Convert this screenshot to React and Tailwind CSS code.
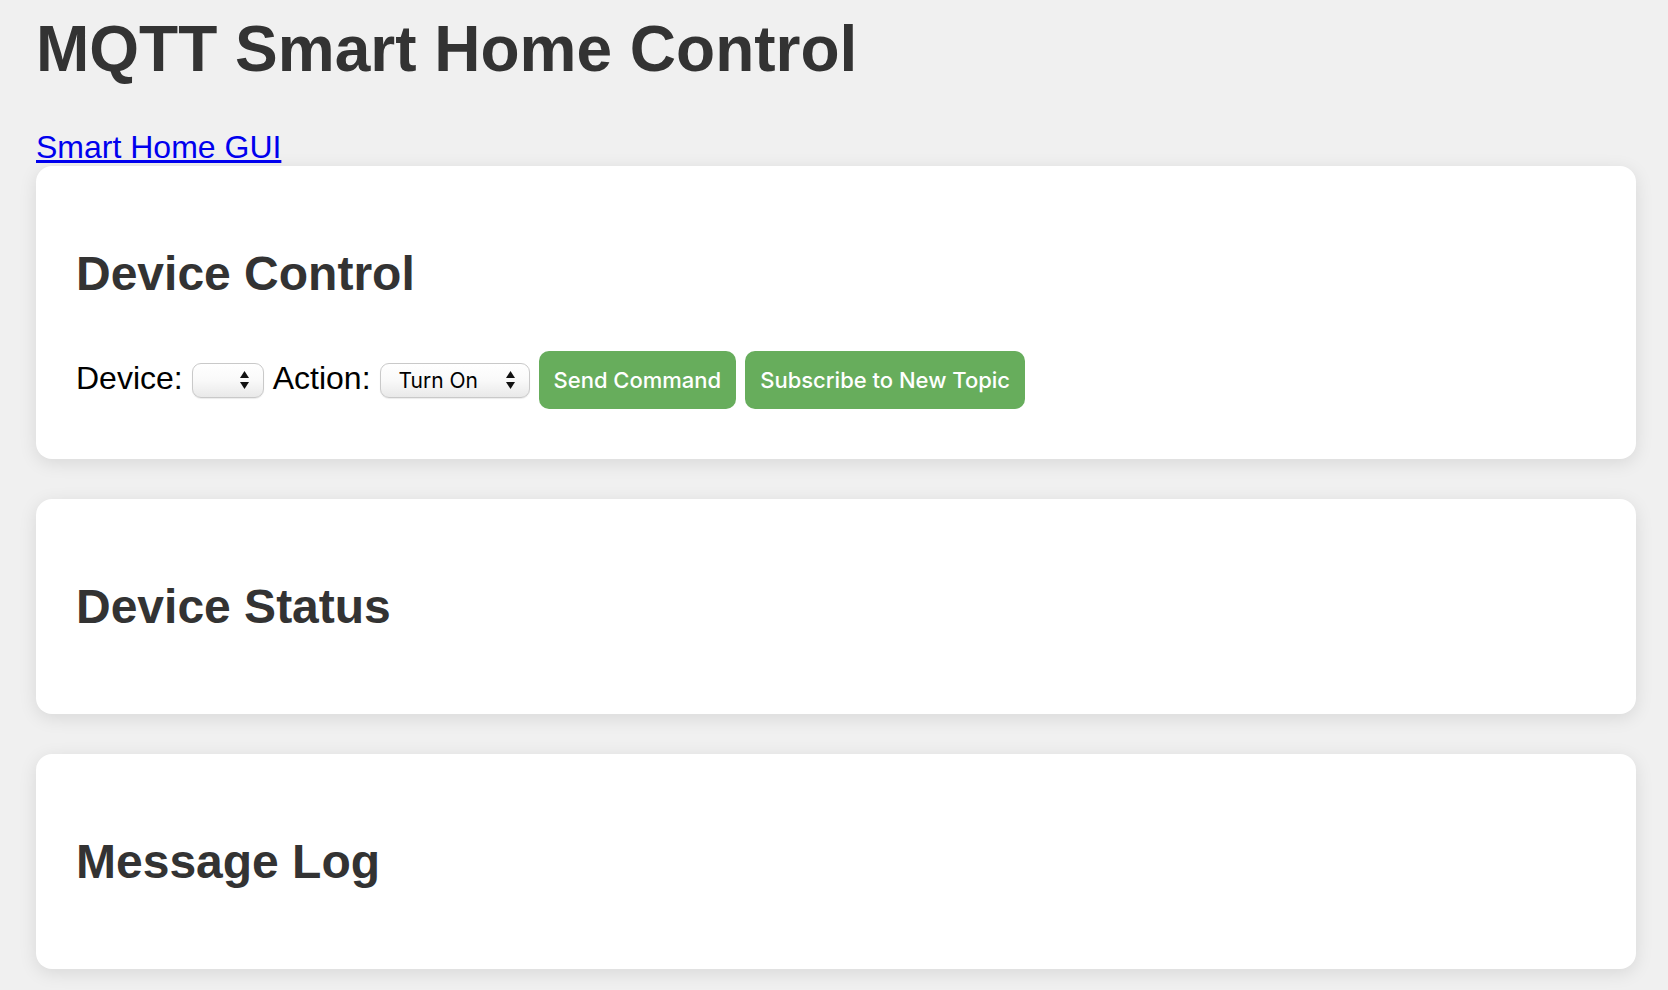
import React from "react";

const Arrows = () => (
    <svg width="9" height="18" viewBox="0 0 9 18" className="shrink-0">
        <polygon points="4.5,0 9,7 0,7" fill="#111" />
        <polygon points="0,11 9,11 4.5,18" fill="#111" />
    </svg>
);

const FakeSelect = ({ width, label }) => (
    <div
        className={`flex items-center justify-between h-[35px] ${width} rounded-[9px] border border-[#c9c9c9] bg-gradient-to-b from-white via-[#f9f9f9] to-[#e9e9e9] shadow-[0_1px_1px_rgba(0,0,0,0.08)] pl-[18px] pr-[14px]`}
    >
        <span className="font-['Inter',sans-serif] text-[21px] text-black leading-none">{label}</span>
        <Arrows />
    </div>
);

const Card = ({ title, children }) => (
    <section className="bg-white rounded-[16px] p-[40px] mb-[40px] shadow-[0_4px_18px_rgba(0,0,0,0.1)]">
        <h2 className="text-[48px] font-bold text-[#333] my-[40px]">{title}</h2>
        {children}
    </section>
);

export default function App() {
    return (
        <div className="min-h-screen bg-[#f0f0f0] pl-[36px] pr-[32px] pt-[12px] leading-[normal] font-['Liberation_Sans',Arial,sans-serif]">
            <h1 className="text-[64px] font-bold text-[#333] mb-[43px]">MQTT Smart Home Control</h1>
            <div className="text-[32px]">
                <a href="#" className="text-[#0000ee] underline">Smart Home GUI</a>
            </div>

            <Card title="Device Control">
                <div className="flex items-center gap-[9px] py-[10px] text-[32px] text-black">
                    <span className="mb-[3px]">Device:</span>
                    <FakeSelect width="w-[72px]" label="" />
                    <span className="mb-[3px]">Action:</span>
                    <FakeSelect width="w-[150px]" label="Turn On" />
                    <button className="h-[58px] px-[15px] rounded-[10px] bg-[#67ad5c] text-white text-[22px] font-medium font-['Inter',sans-serif]">
                        Send Command
                    </button>
                    <button className="h-[58px] px-[15px] rounded-[10px] bg-[#67ad5c] text-white text-[22px] font-medium font-['Inter',sans-serif]">
                        Subscribe to New Topic
                    </button>
                </div>
            </Card>

            <Card title="Device Status" />
            <Card title="Message Log" />
        </div>
    );
}
